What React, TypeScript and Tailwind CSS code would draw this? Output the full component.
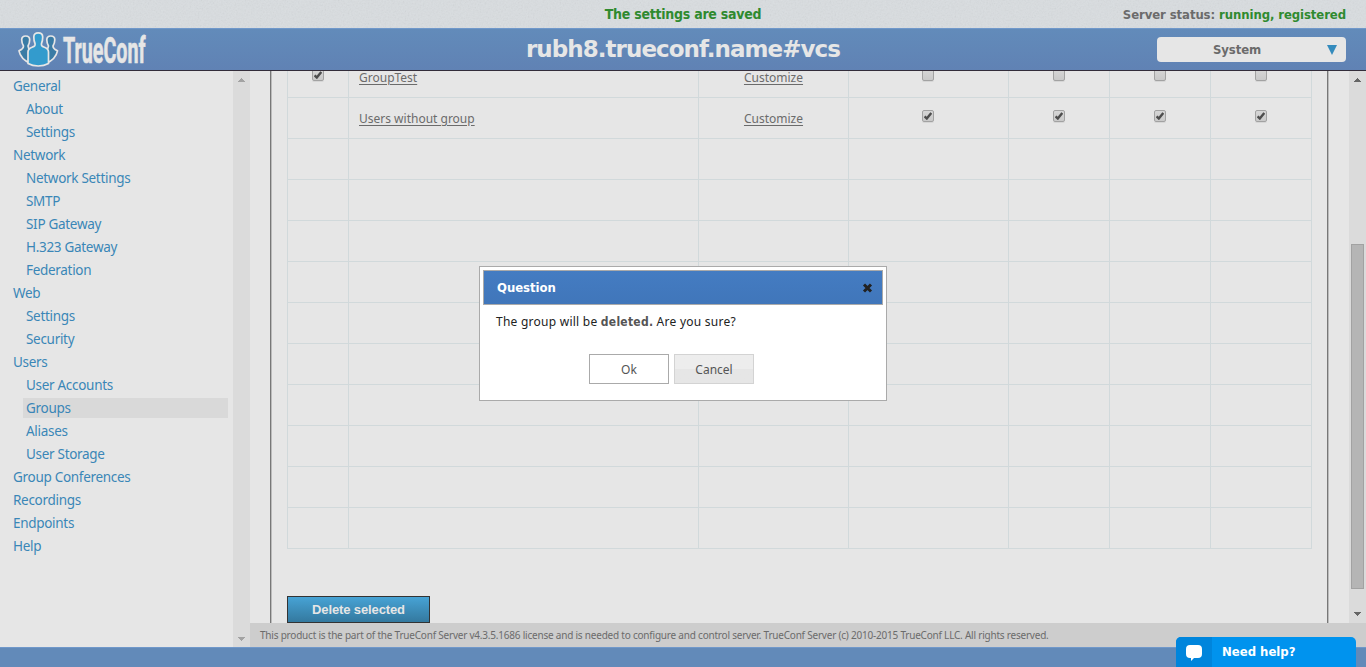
import React from "react";

const sans = "font-['Noto_Sans','Open_Sans',sans-serif]";
const bold = "font-['DejaVu_Sans_Condensed','DejaVu_Sans',sans-serif] font-bold";

type NavItem = { label: string; child?: boolean; active?: boolean };

const nav: NavItem[] = [
  { label: "General" },
  { label: "About", child: true },
  { label: "Settings", child: true },
  { label: "Network" },
  { label: "Network Settings", child: true },
  { label: "SMTP", child: true },
  { label: "SIP Gateway", child: true },
  { label: "H.323 Gateway", child: true },
  { label: "Federation", child: true },
  { label: "Web" },
  { label: "Settings", child: true },
  { label: "Security", child: true },
  { label: "Users" },
  { label: "User Accounts", child: true },
  { label: "Groups", child: true, active: true },
  { label: "Aliases", child: true },
  { label: "User Storage", child: true },
  { label: "Group Conferences" },
  { label: "Recordings" },
  { label: "Endpoints" },
  { label: "Help" },
];

type Row = { selected?: boolean; name?: string; rights?: boolean[] };

const rows: Row[] = [
  { selected: true, name: "GroupTest", rights: [false, false, false, false] },
  { name: "Users without group", rights: [true, true, true, true] },
  {}, {}, {}, {}, {}, {}, {}, {}, {}, {},
];

function Logo() {
  return (
    <svg className="block overflow-visible" width="132" height="41" viewBox="0 0 132 41">
      <g stroke="#e6e6e6" strokeWidth="1.7" strokeLinejoin="round">
        <path d="M1 21.800C4 20.500 5.500 19 5.500 17C4.300 15 3.700 13 3.700 10.800C3.700 8.200 5.200 7 7.700 7S11.700 8.200 11.700 10.800C11.700 13 11.200 15 10 17C10 18.500 11 20 12.500 21V34.500C6 31.500 2 27 1 21.800Z" fill="#3a7ca5" />
        <path d="M39.500 21.800C36.500 20.500 35 19 35 17C36.200 15 36.800 13 36.800 10.800C36.800 8.200 35.300 7 32.800 7S28.800 8.200 28.800 10.800C28.800 13 29.300 15 30.500 17C30.500 18.500 29.500 20 28 21V34.500C34.500 31.500 38.500 27 39.500 21.800Z" fill="#3a7ca5" />
        <path d="M10 34.500V23C10 20.500 11.500 19.300 14 18.300C17 17 17.300 16.500 17 14.500C16 12.500 15.800 10.500 15.800 8C15.800 5 17.500 3.800 20.200 3.800S24.700 5 24.700 8C24.700 10.500 24.500 12.500 23.500 14.500C23.200 16.500 23.500 17 26.500 18.300C29 19.300 30.500 20.500 30.500 23V34.500C24.500 37.800 16 37.800 10 34.500Z" fill="#339bcd" />
      </g>
      <text x="45" y="33.500" textLength="82.500" lengthAdjust="spacingAndGlyphs" stroke="#e6e6e6" strokeWidth="0.600" className="fill-[#e6e6e6] font-['Roboto',sans-serif] text-[37px] font-bold">
        TrueConf
      </text>
    </svg>
  );
}

function Check({ on }: { on: boolean }) {
  return (
    <span className="mt-3 flex size-3 items-center justify-center rounded-[2px] border border-[#a2a2a2] bg-gradient-to-b from-[#d6d6d6] to-[#c9c9c9] shadow-[0_1px_0_#d6d6d6]">
      {on && (
        <svg width="8" height="8" viewBox="0 0 8 8">
          <path d="M.6 4.400L2.800 6.500L7.300 .9" fill="none" stroke="#4d4d4d" strokeWidth="2.400" />
        </svg>
      )}
    </span>
  );
}

function Arrow({ up, color }: { up?: boolean; color: string }) {
  return (
    <svg className="block" width="7" height="4" viewBox="0 0 7 4" shapeRendering="crispEdges">
      <path d={up ? "M3 0H4V1H5V2H6V3H7V4H0V3H1V2H2V1H3Z" : "M0 0H7V1H6V2H5V3H4V4H3V3H2V2H1V1H0Z"} fill={color} />
    </svg>
  );
}

function GroupRow({ row }: { row: Row }) {
  const cell = "flex justify-center border-r border-b border-[#d1d9db]";
  const link = "mt-3.5 h-[13px] leading-[13px] underline underline-offset-2";
  return (
    <div className="grid h-[41px] shrink-0 grid-cols-[61px_350px_150px_160px_101px_101px_101px]">
      <div className={cell}>{row.selected && <Check on />}</div>
      <div className="flex border-r border-b border-[#d1d9db] pl-2.5">
        {row.name && <a className={link}>{row.name}</a>}
      </div>
      <div className={cell}>{row.name && <a className={link}>Customize</a>}</div>
      {[0, 1, 2, 3].map((i) => (
        <div key={i} className={i === 0 ? `${cell} pr-px` : cell}>
          {row.rights && <Check on={row.rights[i]} />}
        </div>
      ))}
    </div>
  );
}

function Dialog() {
  return (
    <div className="absolute top-[266px] left-[479px] flex h-[135px] w-[408px] flex-col border border-[#aaa] bg-white p-[3px]">
      <div className="flex h-[35px] shrink-0 items-center justify-between border border-[#aaa] bg-gradient-to-b from-[#447cc2] to-[#4076ba] pr-[9px] pl-[13px]">
        <span className={`${bold} text-[13px] tracking-[-0.05px] text-white`}>Question</span>
        <svg width="11" height="10" viewBox="0 0 11 10">
          <path d="M2 1.500L9 8.500M9 1.500L2 8.500" stroke="#222" strokeWidth="3" />
        </svg>
      </div>
      <p className="mt-2 h-[18px] pl-[13px] text-[12px] leading-[18px] tracking-[0.25px] whitespace-nowrap text-[#222]">
        The group will be <b className={`${bold} text-[#555]`}>deleted.</b> Are you sure?
      </p>
      <div className="mt-[23px] flex gap-[5px] pl-[106px] text-[12px] text-[#555]">
        <button className="h-[30px] w-20 border border-[#aaa] bg-white pt-0.5">Ok</button>
        <button className="h-[30px] w-20 border border-[#d3d3d3] bg-gradient-to-b from-[#ededed] from-50% to-[#e6e6e6] to-50% pt-0.5">Cancel</button>
      </div>
    </div>
  );
}

export default function App() {
  return (
    <div className={`${sans} relative flex h-[667px] w-[1366px] flex-col overflow-hidden bg-[#e6e6e6]`}>
      <div className="relative h-7 shrink-0 bg-[#d9dde0]">
        <svg className="absolute inset-0 opacity-15" width="1366" height="28">
          <filter id="grain">
            <feTurbulence type="fractalNoise" baseFrequency="0.6" numOctaves="3" />
            <feColorMatrix type="saturate" values="0" />
          </filter>
          <rect width="1366" height="28" filter="url(#grain)" />
        </svg>
        <div className={`${bold} relative grid h-7 grid-cols-[1fr_auto_1fr] items-center`}>
          <span />
          <span className="text-[14px] tracking-[-0.26px] text-[#2f8a2f]">The settings are saved</span>
          <span className="pt-0.5 pr-5 text-right text-[13px] tracking-[-0.09px] text-[#6b6b6b]">
            Server status: <span className="text-[#2f8a2f]">running, registered</span>
          </span>
        </div>
      </div>

      <header className="grid h-[43px] shrink-0 grid-cols-[1fr_auto_1fr] items-center border-t border-b border-t-[#7098ca] border-b-[#332d3a] bg-gradient-to-b from-[#628bba] to-[#6082b4]">
        <div className="pl-[18px]"><Logo /></div>
        <h1 className="font-['DejaVu_Sans',sans-serif] text-[23px] font-bold tracking-[-0.95px] text-[#e6e6e6]">rubh8.trueconf.name#vcs</h1>
        <button className={`${bold} mr-5 flex h-[25px] w-[189px] items-center justify-end justify-self-end rounded-[4px] bg-[#e6e6e6] pr-[9px] text-[13px] text-[#6b6b6b]`}>
          <span className="flex-1 pr-2.5 text-center tracking-[-0.1px]">System</span>
          <svg width="10" height="10" viewBox="0 0 10 10"><path d="M0 0H10L5 10Z" fill="#348bbd" /></svg>
        </button>
      </header>

      <div className="flex h-[576px] shrink-0">
        <nav className="flex w-[233px] flex-col pt-[5px] pl-2.5 text-[13.5px] tracking-[-0.3px] text-[#3a86b7]">
          {nav.map((n, i) => (
            <a
              key={i}
              className={`mb-[3px] h-5 shrink-0 leading-5 ${n.child ? "mr-[5px] ml-[13px] pl-[3px]" : "pl-[3px]"} ${n.active ? "bg-[#d9d9d9]" : ""}`}
            >
              {n.label}
            </a>
          ))}
        </nav>
        <div className="flex w-[17px] flex-col items-center justify-between bg-[#dbdbdb] pt-[7px] pb-1.5">
          <Arrow up color="#a3a3a3" />
          <Arrow color="#a3a3a3" />
        </div>

        <div className="flex w-[1116px] flex-col">
          <div className="flex h-[552px]">
            <main className="flex w-[1099px] pl-5">
              <section className="flex w-[1058px] flex-col overflow-hidden border-x border-[#777] shadow-[inset_1px_0_#bbb,1px_0_#bbb]">
                <div className="-mt-3.5 ml-4 flex w-[1025px] flex-col border-l border-[#d1d9db] text-[12px] text-[#6b6b6b]">
                  {rows.map((r, i) => <GroupRow key={i} row={r} />)}
                </div>
                <button className="mt-[47px] ml-4 h-[27px] w-[143px] shrink-0 border border-[#333] bg-gradient-to-b from-[#47a3d5] to-[#34799f] font-['Liberation_Sans',sans-serif] text-[13px] font-bold tracking-[-0.12px] text-[#e6e6e6]">
                  Delete selected
                </button>
              </section>
            </main>
            <div className="flex w-[17px] flex-col items-center bg-[#dbdbdb] pt-[7px] pb-[7px]">
              <Arrow up color="#666" />
              <div className="mt-[162px] h-[345px] w-[13px] shrink-0 border border-[#a2a2a2] bg-[#b5b5b5]" />
              <div className="mt-auto"><Arrow color="#666" /></div>
            </div>
          </div>
          <footer className="h-6 bg-[#cdcdcd] pl-2.5 text-[10px] leading-6 tracking-[-0.213px] text-[#6b6b6b]">
            This product is the part of the TrueConf Server v4.3.5.1686 license and is needed to configure and control server. TrueConf Server (c) 2010-2015 TrueConf LLC. All rights reserved.
          </footer>
        </div>
      </div>

      <div className="h-5 shrink-0 border-t border-[#7098ca] bg-[#628ab9]" />

      <Dialog />

      <div className="absolute right-2.5 bottom-0 flex h-[30px] w-[180px] overflow-hidden rounded-t-[5px] bg-[#0093ee]">
        <div className="flex w-9 justify-center bg-[#0085dc] pt-2">
          <svg width="16" height="16" viewBox="0 0 16 16">
            <path d="M4 0H12Q16 0 16 4V9Q16 13 12 13H8L5 16V13H4Q0 13 0 9V4Q0 0 4 0Z" fill="#fff" />
          </svg>
        </div>
        <span className={`${bold} pl-2.5 text-[13px] leading-[29px] text-white`}>Need help?</span>
      </div>
    </div>
  );
}
